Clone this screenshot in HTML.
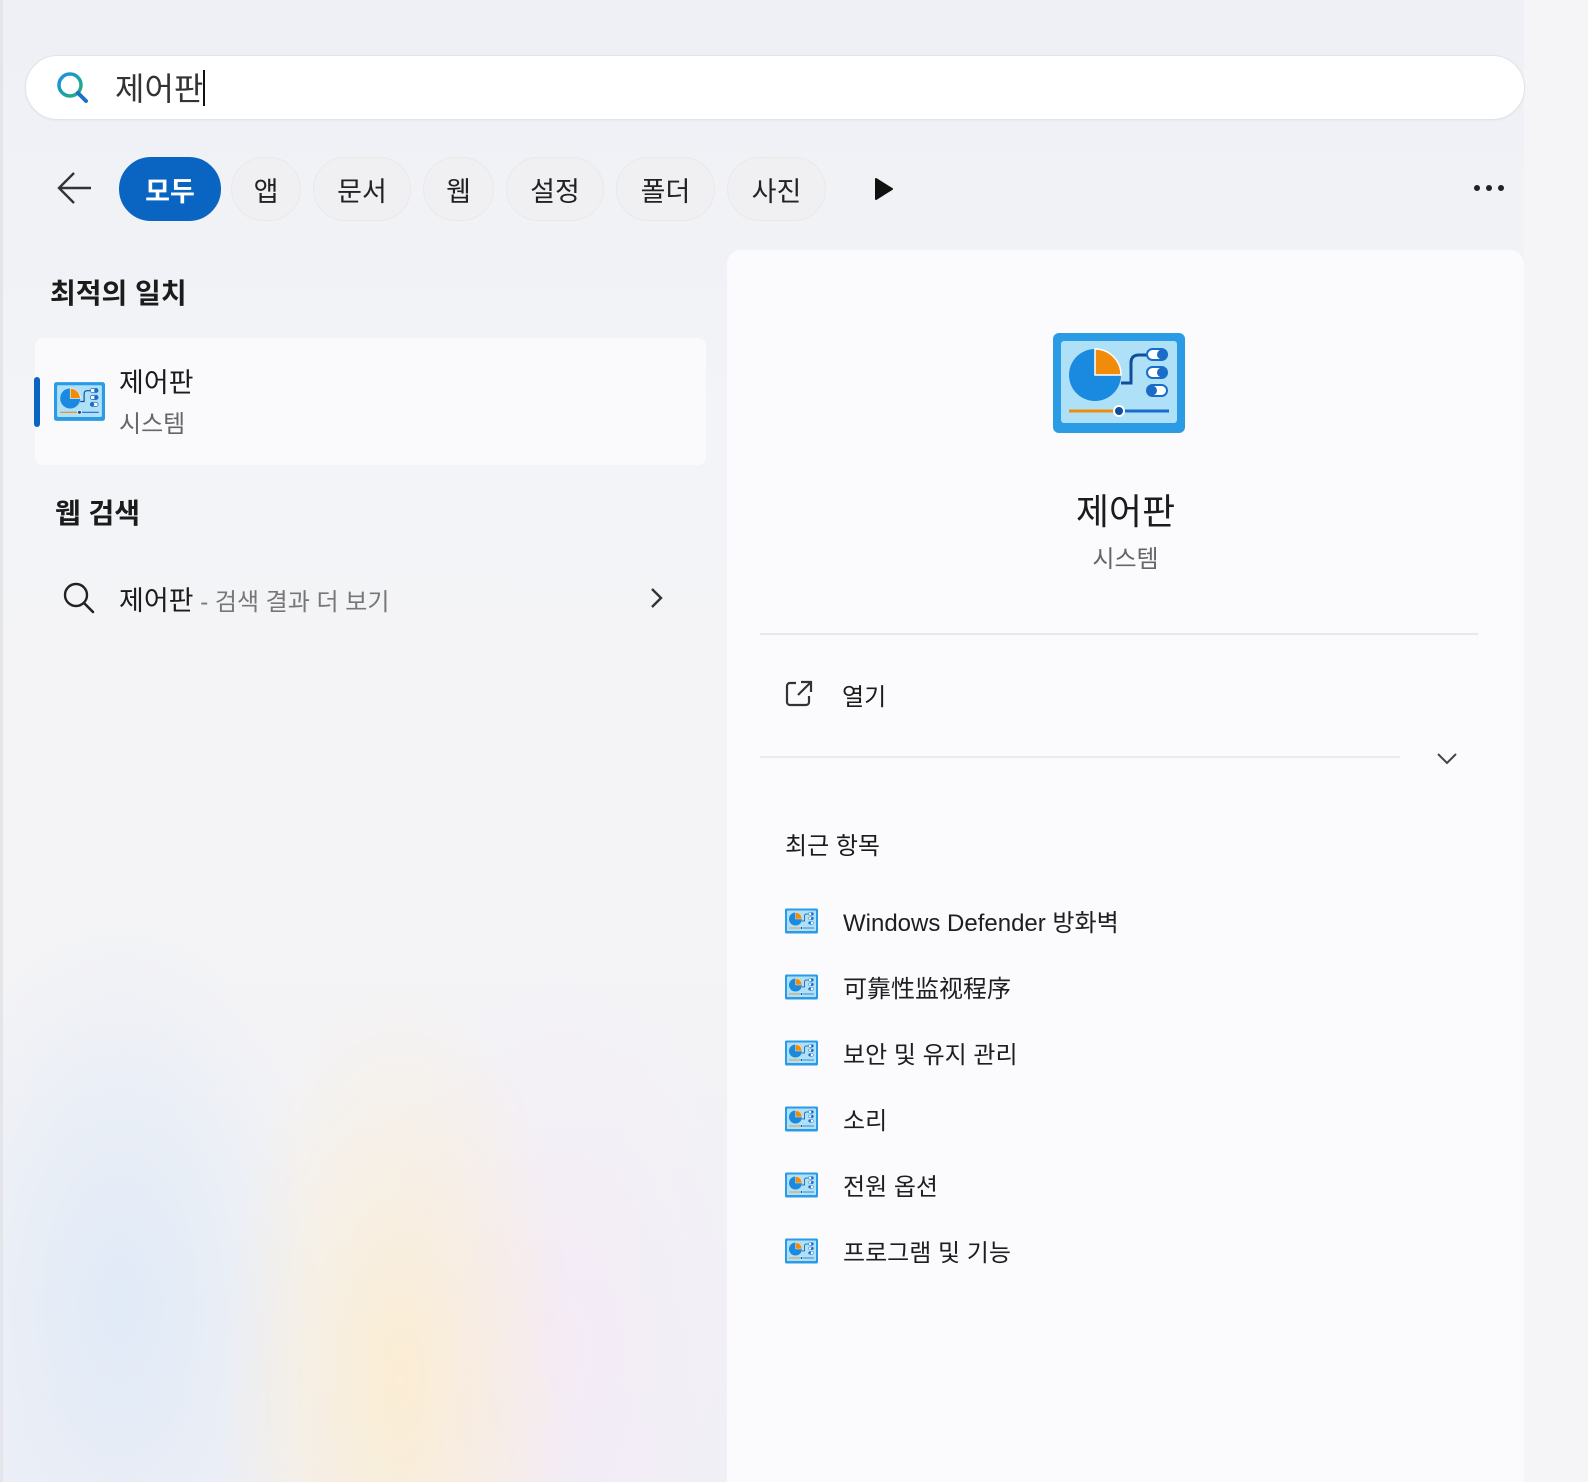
<!DOCTYPE html>
<html><head><meta charset="utf-8">
<style>
*{margin:0;padding:0;box-sizing:border-box}
body{width:1588px;height:1482px;overflow:hidden;position:relative;font-family:"Liberation Sans","Noto Sans CJK KR",sans-serif;color:#1b1b1b;
background:
radial-gradient(ellipse 180px 400px at 400px 1380px,rgba(255,236,200,.75),transparent),
radial-gradient(ellipse 200px 380px at 120px 1300px,rgba(220,232,248,.8),transparent),
radial-gradient(ellipse 200px 400px at 560px 1350px,rgba(245,232,248,.7),transparent),
linear-gradient(180deg,#eef0f6 0%,#f3f4f7 30%,#f4f4f6 60%,#f0f0f5 100%);}
.abs{position:absolute}
.search{left:25px;top:55px;width:1500px;height:65px;border-radius:33px;background:#fff;border:1px solid #e2e3e8;box-shadow:0 1px 2px rgba(0,0,0,.04)}
.pill{position:absolute;top:157px;height:64px;border-radius:32px;background:#f0f0f3;border:1px solid #e9e9ec;font-size:27px;display:flex;align-items:center;justify-content:center;color:#222}
.pill.on{background:#0a65c2;color:#fff;border-color:#0a65c2;font-weight:bold}
.h{font-weight:bold;font-size:28px}
.panel{left:727px;top:250px;width:797px;height:1232px;background:#fbfbfd;border-radius:14px 14px 0 0}
.item{position:absolute;left:785px;display:flex;align-items:center;font-size:24px;color:#1e1e1e}
.item svg{margin-right:25px}
</style></head><body>
<div class="abs" style="left:1524px;top:0;width:64px;height:1482px;background:#f5f5f7"></div>
<div class="abs" style="left:0;top:0;width:3px;height:1482px;background:#e4e5ea"></div>
<div class="abs search"></div>
<svg class="abs" style="left:55px;top:70px" width="36" height="36" viewBox="0 0 36 36"><defs><linearGradient id="sg" x1="0" y1="0" x2="1" y2="1"><stop offset="0" stop-color="#1c8ee6"/><stop offset="1" stop-color="#22b07a"/></linearGradient></defs><circle cx="15" cy="15" r="11" fill="none" stroke="url(#sg)" stroke-width="3.5"/><line x1="23" y1="23" x2="31" y2="31" stroke="#1d6fc8" stroke-width="4" stroke-linecap="round"/></svg>
<div class="abs" style="left:115px;top:64px;font-size:32px;color:#333">제어판<span style="display:inline-block;width:2px;height:36px;background:#111;vertical-align:-6px"></span></div>
<svg class="abs" style="left:56px;top:170px" width="38" height="36" viewBox="0 0 38 36"><path d="M35 18H4M18 3L3 18l15 15" fill="none" stroke="#333" stroke-width="2.4"/></svg>
<div class="pill on" style="left:119px;width:102px">모두</div>
<div class="pill" style="left:231px;width:70px">앱</div>
<div class="pill" style="left:313px;width:98px">문서</div>
<div class="pill" style="left:423px;width:71px">웹</div>
<div class="pill" style="left:506px;width:98px">설정</div>
<div class="pill" style="left:616px;width:99px">폴더</div>
<div class="pill" style="left:727px;width:99px">사진</div>
<svg class="abs" style="left:874px;top:177px" width="20" height="24" viewBox="0 0 20 24"><path d="M2 2L18 12L2 22Z" fill="#111" stroke="#111" stroke-width="2" stroke-linejoin="round"/></svg>
<svg class="abs" style="left:1472px;top:183px" width="34" height="10"><circle cx="5" cy="5" r="3" fill="#222"/><circle cx="17" cy="5" r="3" fill="#222"/><circle cx="29" cy="5" r="3" fill="#222"/></svg>

<div class="abs h" style="left:50px;top:272px">최적의 일치</div>
<div class="abs" style="left:35px;top:338px;width:671px;height:127px;background:#fafafc;border-radius:8px"></div>
<div class="abs" style="left:34px;top:377px;width:6px;height:50px;background:#0a65c2;border-radius:3px"></div>
<svg class="abs" style="left:54px;top:380px" width="51" height="43" viewBox="0 0 132 100"><use href="#cp"/></svg>
<div class="abs" style="left:119px;top:361px;font-size:27px">제어판</div>
<div class="abs" style="left:119px;top:404px;font-size:24px;color:#666">시스템</div>

<div class="abs h" style="left:55px;top:492px">웹 검색</div>
<svg class="abs" style="left:62px;top:581px" width="34" height="34" viewBox="0 0 34 34"><circle cx="14" cy="14" r="11" fill="none" stroke="#222" stroke-width="2.4"/><line x1="22" y1="22" x2="31" y2="31" stroke="#222" stroke-width="2.6" stroke-linecap="round"/></svg>
<div class="abs" style="left:119px;top:579px;font-size:27px">제어판<span style="font-size:24px;color:#777"> - 검색 결과 더 보기</span></div>
<svg class="abs" style="left:648px;top:586px" width="16" height="24" viewBox="0 0 16 24"><path d="M4 3l9 9-9 9" fill="none" stroke="#333" stroke-width="2.4"/></svg>

<div class="abs panel"></div>
<svg class="abs" style="left:1053px;top:333px" width="132" height="100" viewBox="0 0 132 100">
<defs><g id="cp">
<rect x="0" y="0" width="132" height="100" rx="6" fill="#2b9be6"/>
<rect x="8" y="8" width="116" height="82" rx="3" fill="#aee0f7"/>
<circle cx="42" cy="42" r="26" fill="#1a8ae0"/>
<path d="M42 16V42H68A26 26 0 0 0 42 16Z" fill="#f08c0a" stroke="#fff" stroke-width="1.5"/>
<path d="M68 50h10V30q0-8 8-8h10" fill="none" stroke="#0d4f9a" stroke-width="3"/>
<rect x="94" y="16" width="20" height="11" rx="5.5" fill="#fff" stroke="#1a6cc8" stroke-width="2"/><circle cx="109" cy="21.5" r="5" fill="#1a6cc8"/>
<rect x="94" y="34" width="20" height="11" rx="5.5" fill="#fff" stroke="#1a6cc8" stroke-width="2"/><circle cx="109" cy="39.5" r="5" fill="#1a6cc8"/>
<rect x="94" y="52" width="20" height="11" rx="5.5" fill="#fff" stroke="#1a6cc8" stroke-width="2"/><circle cx="99" cy="57.5" r="5" fill="#1a6cc8"/>
<line x1="16" y1="78" x2="62" y2="78" stroke="#f08c0a" stroke-width="3"/><line x1="70" y1="78" x2="116" y2="78" stroke="#1a6cc8" stroke-width="3"/>
<circle cx="66" cy="78" r="5" fill="#0d4f9a" stroke="#fff" stroke-width="2"/>
</g></defs><use href="#cp"/></svg>
<div class="abs" style="left:727px;width:797px;top:483px;text-align:center;font-size:36px">제어판</div>
<div class="abs" style="left:727px;width:797px;top:539px;text-align:center;font-size:24px;color:#666">시스템</div>
<div class="abs" style="left:760px;top:633px;width:718px;height:2px;background:#e8e8ec"></div>
<svg class="abs" style="left:784px;top:679px" width="30" height="30" viewBox="0 0 30 30"><path d="M12 4H6a3 3 0 0 0-3 3v16a3 3 0 0 0 3 3h16a3 3 0 0 0 3-3v-6" fill="none" stroke="#333" stroke-width="2.2"/><path d="M17 3h10v10M27 3L14 16" fill="none" stroke="#333" stroke-width="2.2"/></svg>
<div class="abs" style="left:842px;top:677px;font-size:24px">열기</div>
<div class="abs" style="left:760px;top:756px;width:640px;height:2px;background:#ececef"></div>
<svg class="abs" style="left:1436px;top:751px" width="22" height="14" viewBox="0 0 22 14"><path d="M2 3l9 9 9-9" fill="none" stroke="#444" stroke-width="2"/></svg>
<div class="abs" style="left:785px;top:826px;font-size:24px">최근 항목</div>

<div class="item" style="top:903px"><svg width="33" height="26" viewBox="0 0 132 100"><use href="#cp"/></svg>Windows Defender 방화벽</div>
<div class="item" style="top:969px"><svg width="33" height="26" viewBox="0 0 132 100"><use href="#cp"/></svg>可靠性监视程序</div>
<div class="item" style="top:1035px"><svg width="33" height="26" viewBox="0 0 132 100"><use href="#cp"/></svg>보안 및 유지 관리</div>
<div class="item" style="top:1101px"><svg width="33" height="26" viewBox="0 0 132 100"><use href="#cp"/></svg>소리</div>
<div class="item" style="top:1167px"><svg width="33" height="26" viewBox="0 0 132 100"><use href="#cp"/></svg>전원 옵션</div>
<div class="item" style="top:1233px"><svg width="33" height="26" viewBox="0 0 132 100"><use href="#cp"/></svg>프로그램 및 기능</div>
</body></html>
